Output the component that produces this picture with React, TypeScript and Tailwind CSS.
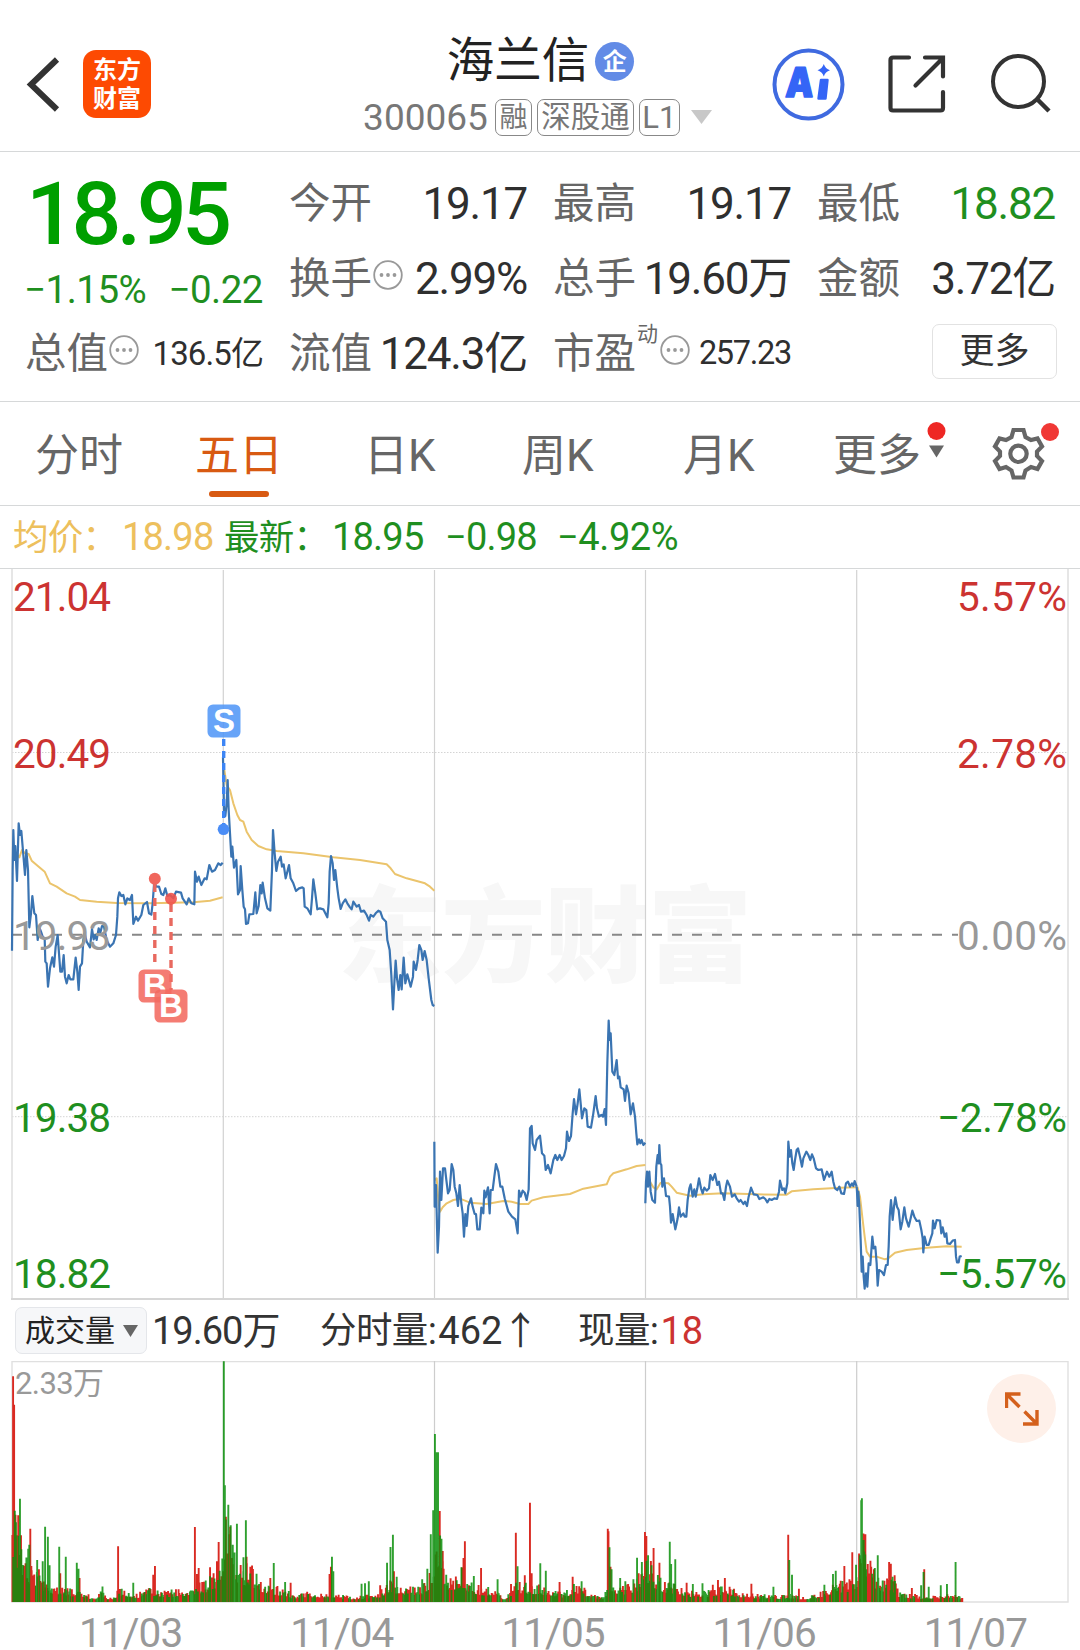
import React from 'react';

type Pair = [number, number];

interface DaySeries {
    transform: string;
    price: string;
    avg: string;
}

// Intraday series, stored at 3x density
const DAYS: DaySeries[] = [
    {
        transform: 'translate(0 570) scale(0.33333)',
        price: '36,1142 38,900 40,780 43,870 46,828 51,933 56,760 60,795 64,783 70,855 75,915 79,840 84,900 88,1072 93,1030 97,978 103,1030 108,1035 113,1110 118,1072 123,1085 128,1100 134,1105 136,1175 140,1180 144,1250 150,1195 157,1162 162,1190 167,1130 173,1095 177,1150 181,1205 186,1205 191,1155 195,1220 200,1240 206,1215 211,1228 220,1228 227,1163 232,1205 236,1260 240,1190 246,1180 250,1110 254,1090 260,1115 270,1132 276,1077 281,1108 286,1095 290,1110 296,1075 301,1088 306,1068 312,1070 320,1110 330,1130 340,1120 348,1095 352,1040 354,985 358,967 364,978 370,975 376,1003 382,985 390,990 396,975 400,1062 408,1040 414,1052 424,1035 430,1005 441,996 447,1030 454,1034 458,1000 463,930 468,950 477,950 484,972 490,975 496,955 502,978 510,975 520,985 528,965 543,968 548,985 560,1003 566,985 574,1000 583,1003 585,905 591,935 596,920 604,945 614,925 620,928 628,885 636,905 645,900 655,880 662,885 668,878',
        avg: '46,850 58,862 66,840 75,850 86,852 95,872 110,885 134,905 150,940 170,950 200,970 225,980 240,990 290,995 350,999 450,1000 580,997 630,992 668,982',
    },
    {
        transform: 'translate(0 570) scale(0.33333)',
        price: '669,560 672,720 676,738 680,700 683,630 686,720 690,790 694,860 697,830 702,893 709,870 714,973 720,960 722,888 727,960 731,1010 735,1018 738,1062 744,1060 748,1033 760,1032 766,967 770,1030 776,1008 781,945 785,970 788,938 795,985 802,1015 811,1022 816,900 819,780 824,850 829,903 834,875 842,860 846,890 851,883 857,925 862,905 867,885 872,925 880,940 888,963 897,955 907,952 911,955 914,1010 922,1015 932,1033 936,985 940,928 946,970 952,1018 960,1015 970,1018 982,1042 986,1000 989,905 993,858 998,880 1002,930 1006,900 1012,955 1016,985 1022,1017 1028,1000 1036,988 1042,1000 1050,1012 1055,1018 1060,995 1070,1010 1077,1005 1083,1025 1092,1022 1100,1035 1107,1052 1112,1035 1120,1040 1127,1030 1135,1022 1141,1025 1148,1045 1158,1055 1162,1110 1169,1140 1174,1215 1179,1318 1183,1240 1187,1172 1191,1225 1196,1260 1201,1215 1205,1258 1211,1163 1216,1240 1222,1213 1232,1250 1239,1220 1241,1175 1248,1200 1253,1170 1258,1125 1264,1140 1268,1170 1274,1143 1280,1170 1286,1225 1294,1290 1298,1305 1303,1308',
        avg: '673,600 680,645 690,660 700,700 712,735 720,750 730,755 740,785 755,810 775,828 800,838 830,843 910,850 1000,862 1080,870 1160,883 1172,895 1185,912 1220,925 1275,940 1290,950 1303,962',
    },
    {
        transform: 'translate(420 850) scale(0.33333)',
        price: '43,875 44,1070 48,1005 53,1208 57,1130 60,965 64,1050 69,955 75,955 79,990 84,1030 89,1020 95,942 100,960 104,1010 109,1030 114,1068 119,1005 124,1060 128,1090 132,1160 136,1092 140,1128 145,1068 153,1045 158,1070 164,1092 168,1092 172,1138 179,1138 184,1073 190,1090 193,1022 197,1042 204,1012 209,1090 212,1020 218,1020 223,980 228,942 235,965 241,1010 247,1010 254,1045 265,1085 276,1100 286,1108 293,1150 297,1022 302,1040 308,1022 314,1028 320,1050 326,1018 330,835 335,828 338,880 345,900 350,870 360,857 366,910 373,917 377,960 384,945 392,970 400,930 406,915 412,930 419,915 425,930 432,918 438,895 441,845 447,873 453,858 458,790 462,747 468,793 473,760 478,718 482,760 486,805 493,775 499,780 503,830 513,833 520,790 527,738 531,775 537,800 544,795 549,800 554,777 558,825 562,640 566,512 569,570 572,550 577,665 583,675 590,630 594,685 598,680 602,712 611,718 615,753 620,707 626,730 632,793 639,760 645,800 649,850 652,883 657,868 661,880 665,870 670,885 676,878',
        avg: '44,990 50,985 56,1060 60,1085 68,1072 80,1060 100,1050 120,1046 150,1058 200,1062 250,1053 275,1055 300,1062 325,1062 335,1052 370,1042 450,1032 490,1016 560,1003 570,980 580,970 620,958 650,948 676,945',
    },
    {
        transform: 'translate(640 1000) scale(0.33333)',
        price: '16,610 18,545 21,515 24,560 28,515 32,575 37,600 45,608 49,500 53,465 56,490 58,435 61,490 64,495 67,560 72,535 78,588 87,590 90,620 93,668 98,642 106,688 110,670 113,655 117,622 122,650 130,640 134,650 139,650 143,600 148,565 152,553 158,590 163,568 167,590 172,565 177,535 183,565 188,580 193,563 200,572 207,565 211,525 218,540 225,522 232,555 237,545 243,580 248,580 253,600 258,560 262,542 270,560 276,590 284,583 290,595 297,605 302,600 310,612 315,605 321,618 326,590 333,563 341,583 352,585 358,597 370,592 376,597 382,607 388,597 395,600 403,595 411,597 417,575 420,542 427,570 432,565 436,580 442,550 445,425 449,470 453,450 457,490 461,510 465,480 470,450 474,445 480,470 486,500 490,475 499,455 505,465 511,480 516,463 521,475 528,505 535,510 545,508 552,540 561,515 568,530 575,515 580,545 585,565 592,570 598,560 604,580 612,582 618,550 624,545 630,560 636,550 640,558 644,543 650,560',
        avg: '22,520 30,545 40,562 50,568 62,548 85,550 95,560 110,578 150,587 190,583 250,580 350,583 440,584 455,574 520,568 600,563 650,562',
    },
    {
        transform: 'translate(640 1000) scale(0.33333)',
        price: '650,560 651,575 653,618 655,575 658,620 662,720 665,815 668,770 671,830 674,866 678,820 682,860 686,790 691,795 697,710 701,745 706,740 710,790 713,857 717,810 725,815 732,825 738,795 743,795 746,740 749,650 753,600 758,660 762,620 766,592 771,620 776,630 782,688 787,665 793,622 798,655 806,680 812,655 817,632 823,650 830,663 838,662 844,690 848,715 850,757 854,710 860,735 866,735 872,715 877,700 879,662 884,685 890,660 900,662 904,700 908,682 914,710 919,700 922,730 930,732 938,722 945,720 948,770 951,787 956,787 959,770 965,768',
        avg: '652,560 660,590 668,660 674,710 680,755 690,770 710,770 735,778 745,775 765,758 800,750 860,743 920,739 965,740',
    },
];

const DAY_LINES = [223.3, 434.5, 645.5, 856.7];

// Typical volume level along the time axis
const VOLUME_LEVELS: Pair[] = [
    [34, 250], [45, 230], [60, 140], [80, 110], [110, 75], [150, 48], [200, 36], [255, 22], [275, 8], [298, 38], [308, 12], [330, 14], [345, 38],
    [400, 22], [440, 38], [480, 28], [540, 36], [590, 50], [630, 85], [645, 150], [655, 245], [690, 110], [730, 90], [770, 50],
    [820, 36], [860, 16], [900, 28], [930, 20], [950, 30], [980, 20], [1030, 12], [1070, 20], [1100, 25], [1140, 60], [1170, 38],
    [1230, 45], [1250, 80], [1275, 220], [1290, 100], [1310, 62], [1340, 90], [1360, 55], [1400, 40], [1440, 35], [1460, 8],
    [1500, 50], [1540, 48], [1590, 40], [1640, 25], [1665, 50], [1700, 36], [1730, 20], [1750, 12], [1770, 50], [1810, 42],
    [1850, 60], [1880, 120], [1900, 80], [1930, 55], [1960, 50], [2000, 30], [2050, 30], [2100, 42], [2150, 28], [2200, 20],
    [2250, 18], [2300, 20], [2340, 10], [2380, 24], [2420, 50], [2470, 60], [2490, 90], [2505, 190], [2520, 110], [2560, 60],
    [2590, 70], [2610, 28], [2650, 20], [2700, 14], [2750, 24], [2795, 12],
];

const RED_SPIKES: Pair[] = [
    [38, 677], [41, 592], [45, 262], [53, 260], [61, 200], [88, 220], [91, 108], [113, 98], [175, 86], [231, 72], [343, 167], [445, 82],
    [450, 108], [566, 225], [572, 84], [577, 102], [610, 104], [630, 122], [635, 180], [656, 256], [716, 136], [727, 106], [785, 72],
    [844, 58], [957, 84], [961, 106], [1104, 50], [1144, 92], [1277, 273], [1286, 122], [1346, 132], [1350, 182], [1397, 102],
    [1484, 54], [1498, 208], [1524, 80], [1539, 298], [1544, 86], [1625, 60], [1663, 76], [1765, 220], [1767, 212], [1773, 106],
    [1873, 210], [1877, 198], [1898, 162], [1915, 118], [1994, 58], [2070, 52], [2085, 66], [2105, 72], [2182, 55], [2289, 202],
    [2320, 40], [2452, 108], [2475, 149], [2511, 194], [2513, 203], [2520, 114], [2530, 106], [2582, 120], [2587, 115], [2598, 80],
    [2648, 42], [2684, 98],
];

const GREEN_SPIKES: Pair[] = [
    [43, 274], [58, 310], [62, 158], [82, 160], [85, 172], [108, 126], [124, 122], [131, 226], [139, 196], [144, 110], [172, 166],
    [191, 136], [223, 118], [228, 100], [387, 58], [650, 722], [653, 350], [663, 292], [670, 230], [676, 172], [688, 235], [707, 134],
    [714, 245], [745, 85], [795, 117], [828, 60], [964, 136], [968, 92], [1050, 55], [1060, 56], [1071, 62], [1124, 118],
    [1134, 165], [1141, 202], [1152, 76], [1226, 68], [1241, 100], [1251, 203], [1258, 275], [1263, 504], [1268, 449], [1272, 449], [1282, 190],
    [1340, 104], [1376, 78], [1445, 68], [1503, 107], [1569, 116], [1585, 94], [1689, 62], [1770, 164], [1776, 98], [1801, 72],
    [1816, 62], [1850, 133], [1864, 120], [1882, 140], [1892, 110], [1945, 181], [1949, 114], [1961, 128], [2012, 54], [2040, 56],
    [2246, 46], [2292, 126], [2300, 82], [2394, 52], [2419, 84], [2427, 94], [2486, 112], [2497, 140], [2501, 305], [2503, 311],
    [2508, 186], [2549, 140], [2592, 76], [2675, 50], [2682, 90], [2697, 46], [2732, 50], [2750, 54], [2775, 120],
];

function levelAt(x: number) {
    for (let i = 1; i < VOLUME_LEVELS.length; i++) {
        const [x1, h1] = VOLUME_LEVELS[i];
        if (x <= x1) {
            const [x0, h0] = VOLUME_LEVELS[i - 1];
            return h0 + ((h1 - h0) * (x - x0)) / (x1 - x0);
        }
    }
    return 0;
}

function buildVolume() {
    let red = '';
    let green = '';
    let seed = 7;
    const bar = (x: number, h: number) => `M${(x / 2.904).toFixed(2)} 1603v${(-h / 3).toFixed(1)}`;
    for (let x = 36; x < 2795; x += 2.54) {
        seed = (seed * 16807) % 2147483647;
        const noise = (seed % 1000) / 1000;
        seed = (seed * 16807) % 2147483647;
        const h = Math.max(8, levelAt(x) * (0.5 + 0.75 * noise * noise));
        if (seed % 100 < 64) red += bar(x, h);
        else green += bar(x, h);
    }
    RED_SPIKES.forEach(([x, h]) => { red += bar(x, h); });
    GREEN_SPIKES.forEach(([x, h]) => { green += bar(x, h); });
    return { red, green };
}

const VOLUME = buildVolume();

function MoreDots() {
    return (
        <svg className="h-[30px] w-[30px] shrink-0" viewBox="0 0 30 30" fill="none">
            <circle cx="15" cy="15" r="13.8" stroke="#999" strokeWidth="1.8" />
            <circle cx="8.5" cy="15" r="1.9" fill="#999" />
            <circle cx="15" cy="15" r="1.9" fill="#999" />
            <circle cx="21.5" cy="15" r="1.9" fill="#999" />
        </svg>
    );
}

interface QuoteProps {
    label: string;
    value: string;
    valueClass?: string;
    dots?: boolean;
    sup?: string;
}

function Quote({ label, value, valueClass = 'text-[44px] tracking-[-1.2px] text-[#2f2f2f]', dots, sup }: QuoteProps) {
    return (
        <div className="flex h-[75px] items-center justify-between whitespace-nowrap leading-none">
            <div className="-ml-px flex items-center">
                <span className="pt-px text-[41.500px] text-[#666]">{label}</span>
                {sup && <span className="-mt-[38px] ml-px text-[21px] text-[#666]">{sup}</span>}
                {dots && <span className={sup ? '-mt-[8px] ml-[2px]' : '-mt-[8px] ml-px'}><MoreDots /></span>}
            </div>
            <span className={valueClass}>{value}</span>
        </div>
    );
}

function Header() {
    return (
        <header className="flex h-[152px] border-b border-[#d6d8d9] pl-[26px]">
            <div className="flex w-[334px] items-start pt-[50px]">
                <svg className="mt-[6px] h-[58px] w-[34px]" viewBox="0 0 34 58" fill="none" stroke="#333" strokeWidth="6">
                    <path d="M31 3.500L5 28.500L31 53.500" strokeLinejoin="miter" />
                </svg>
                <div className="ml-[23px] flex h-[68px] w-[68px] flex-col items-center justify-center rounded-[13px] bg-[#fd4a02] pt-px text-[24px] font-bold leading-[29px] text-white">
                    <span>东方</span>
                    <span>财富</span>
                </div>
            </div>

            <div className="flex w-[352px] flex-col items-center pt-[38px]">
                <div className="flex items-center pl-[9px] leading-none">
                    <span className="text-[47.500px] text-[#222]">海兰信</span>
                    <span className="ml-[6px] flex h-[39px] w-[39px] items-center justify-center rounded-full bg-[#628be6] text-[24px] font-bold text-white">企</span>
                </div>
                <div className="mt-[13px] flex items-center gap-[5px] whitespace-nowrap pl-[4px] leading-none text-[#777]">
                    <span className="mr-[2px] text-[37px]">300065</span>
                    <span className="flex h-[37px] w-[37px] items-center justify-center rounded-[7px] border border-[#888] pt-px text-[28px]">融</span>
                    <span className="flex h-[37px] w-[97px] items-center justify-center rounded-[7px] border border-[#888] pt-px text-[29.500px]">深股通</span>
                    <span className="flex h-[37px] w-[41px] items-center justify-center rounded-[7px] border border-[#888] text-[31px]">L1</span>
                    <svg className="ml-[5px] h-[15px] w-[23px]" viewBox="0 0 23 15"><path d="M1 0H22L11.500 14Z" fill="#c8c8c8" /></svg>
                </div>
            </div>

            <div className="ml-[60px] flex items-start pt-[48px]">
                <svg className="h-[73px] w-[73px]" viewBox="0 0 73 73" fill="none">
                    <circle cx="36.500" cy="36.500" r="34" stroke="#3f6ae0" strokeWidth="4" />
                    <text x="12.500" y="49.500" fontSize="41" fontWeight="900" fill="#3565f6" stroke="#3565f6" strokeWidth="1.600" strokeLinejoin="round" fontFamily="Inter" transform="skewX(-3) translate(3 0)" textLength="28" lengthAdjust="spacingAndGlyphs">A</text>
                    <path d="M49 32H55.500L53.500 50.500H46.500Z" fill="#3565f6" stroke="#3565f6" strokeWidth="2.400" strokeLinejoin="round" />
                    <path d="M51.800 16Q53.300 20.700 58 22.300Q53.300 23.800 51.800 28.500Q50.200 23.800 45.500 22.300Q50.200 20.700 51.800 16Z" fill="#3565f6" />
                </svg>
                <svg className="ml-[42px] mt-[6px] h-[60px] w-[60px]" viewBox="0 0 60 60" fill="none" stroke="#333" strokeWidth="4.200" strokeLinecap="round">
                    <path d="M22 3.500H6Q3.500 3.500 3.500 6V54Q3.500 56.500 6 56.500H53.500Q56 56.500 56 54V38" />
                    <path d="M38 3.500H56V22.500M55 5L28.500 31.500" />
                </svg>
                <svg className="ml-[42px] mt-[5px] h-[62px] w-[62px]" viewBox="0 0 62 62" fill="none" stroke="#333" strokeWidth="4">
                    <circle cx="29.500" cy="28.500" r="25.500" />
                    <path d="M48 46L60 58" strokeWidth="4.500" />
                </svg>
            </div>
        </header>
    );
}

function Summary() {
    return (
        <section className="flex h-[250px] gap-[27px] border-b border-[#d6d8d9] pl-[26px] pt-[14px]">
            <div className="w-[237px]">
                <div className="flex h-[150px] flex-col">
                    <span className="mt-[4px] text-[88px] font-medium leading-none tracking-[-4.600px] text-[#009f00]">18.95</span>
                    <div className="-ml-[2px] mt-[13px] flex justify-between whitespace-nowrap text-[38.500px] leading-none tracking-[-0.500px] text-[#1f8f1f]">
                        <span>−1.15%</span>
                        <span>−0.22</span>
                    </div>
                </div>
                <Quote label="总值" value="136.5亿" valueClass="text-[33px] tracking-[-0.900px] text-[#2f2f2f]" dots />
            </div>
            <div className="w-[237px]">
                <Quote label="今开" value="19.17" />
                <Quote label="换手" value="2.99%" dots />
                <Quote label="流值" value="124.3亿" />
            </div>
            <div className="w-[237px]">
                <Quote label="最高" value="19.17" />
                <Quote label="总手" value="19.60万" />
                <Quote label="市盈" sup="动" value="257.23" valueClass="text-[32.500px] tracking-[-1.300px] text-[#2f2f2f]" dots />
            </div>
            <div className="w-[237px]">
                <Quote label="最低" value="18.82" valueClass="text-[44px] tracking-[-1.2px] text-[#1f8f1f]" />
                <Quote label="金额" value="3.72亿" />
                <div className="flex h-[75px] items-center justify-end pb-[5px]">
                    <button className="-mr-[2px] flex h-[55px] w-[125px] items-center justify-center rounded-[7px] border border-[#e2e2e2] text-[35px] leading-none text-[#333]">更多</button>
                </div>
            </div>
        </section>
    );
}

function Tabs() {
    return (
        <nav className="flex h-[104px] items-center border-b border-[#d6d8d9] pl-[35px] text-[44px] leading-none text-[#666]">
            <span className="w-[160px] pt-[4px]">分时</span>
            <span className="relative w-[169px] pt-[4px] text-[#d85a12]">
                五日
                <i className="absolute -bottom-[19px] left-[14px] h-[6px] w-[60px] rounded-full bg-[#d85a12]" />
            </span>
            <span className="w-[158px] pt-[4px]">日K</span>
            <span className="w-[161px] pt-[4px]">周K</span>
            <span className="w-[150px] pt-[4px]">月K</span>
            <span className="w-[94px] pt-[4px]">更多</span>
            <svg className="-mt-[28px] h-[38px] w-[20px]" viewBox="0 0 20 38">
                <circle cx="9.500" cy="10" r="9" fill="#ee2724" />
                <path d="M2 24.500H17L9.500 36.500Z" fill="#666" />
            </svg>
            <div className="relative ml-[45px]">
                <svg className="h-[53px] w-[53px]" viewBox="0 0 53 53" fill="none" stroke="#666" strokeWidth="4.200">
                    <path d="M21.500 3H31.500L33.500 10L39 13L45.500 11.500L50 19.500L45 24.500V29L50 34L45.500 42L39 40L33.500 43.500L31.500 50.500H21.500L19.500 43.500L14 40L7.500 42L3 34L8 29V24.500L3 19.500L7.500 11.500L14 13L19.500 10Z" />
                    <circle cx="26.500" cy="26.800" r="8.200" />
                </svg>
                <i className="absolute -right-[14px] -top-[4px] h-[18px] w-[18px] rounded-full bg-[#f03835]" />
            </div>
        </nav>
    );
}

function AxisLabel({ y, left, right, width, color }: { y: number; left: string; right: string; width: number; color: string }) {
    return (
        <g fill={color} fontSize="40.5">
            <text x="13" y={y} textLength="98" lengthAdjust="spacing">{left}</text>
            <text x={1067 - width} y={y} textLength={width} lengthAdjust="spacing">{right}</text>
        </g>
    );
}

function Badge({ x, y, letter, color }: { x: number; y: number; letter: string; color: string }) {
    return (
        <g>
            <rect x={x} y={y} width="33" height="33" rx="5.500" fill={color} fillOpacity="0.88" />
            <text x={x + 16.5} y={y + 27.5} textAnchor="middle" fontSize="33" fontWeight="700" fill="#fff" fontFamily="Liberation Sans">{letter}</text>
        </g>
    );
}

function PriceChart() {
    return (
        <svg className="block h-[731px] w-[1080px]" viewBox="0 569 1080 731" fill="none">
            <text x="338" y="974" fontSize="104" fontWeight="900" fill="#f7f7f7" textLength="414">东方财富</text>
            <g stroke="#d2d2d2" strokeWidth="1.2">
                {DAY_LINES.map((x) => <path key={x} d={`M${x} 570V1299`} />)}
            </g>
            <path d="M12 752.500H1068M12 1116.700H1068" stroke="#d4d4d4" strokeWidth="1" strokeDasharray="1.500 1.500" />
            <path d="M12 569V1299M1068 569V1299" stroke="#e0e0e0" strokeWidth="1.600" />
            <path d="M11 1299H1069" stroke="#d6d6d6" strokeWidth="2" />
            <path d="M12 934.700H958" stroke="#888" strokeWidth="1.900" strokeDasharray="10 10" />
            {DAYS.map((d, i) => (
                <g key={i} transform={d.transform} strokeLinejoin="round">
                    <polyline points={d.avg} stroke="#ebc46c" strokeWidth="6" />
                    <polyline points={d.price} stroke="#3a74b2" strokeWidth="6.600" />
                </g>
            ))}
            <AxisLabel y={610.5} left="21.04" right="5.57%" width={110} color="#cc3331" />
            <AxisLabel y={767.5} left="20.49" right="2.78%" width={110} color="#cc3331" />
            <AxisLabel y={949.5} left="19.93" right="0.00%" width={110} color="#999" />
            <AxisLabel y={1131.5} left="19.38" right="−2.78%" width={130} color="#1f8f1f" />
            <AxisLabel y={1288} left="18.82" right="−5.57%" width={130} color="#1f8f1f" />

            <path d="M223.700 739V829" stroke="#3c85f5" strokeWidth="3.400" strokeDasharray="7 5" />
            <circle cx="223.500" cy="829.300" r="5.800" fill="#4a8df6" />
            <path d="M154.800 884V968M171 904V990" stroke="#e8695f" strokeWidth="3.400" strokeDasharray="8 6" />
            <circle cx="154.800" cy="878.700" r="6" fill="#f0665c" />
            <circle cx="171" cy="898.700" r="6" fill="#f0544c" fillOpacity="0.9" />
            <Badge x={207.5} y={704.5} letter="S" color="#5297f7" />
            <Badge x={138.5} y={969.5} letter="B" color="#f26a60" />
            <Badge x={154.5} y={989.5} letter="B" color="#f26a60" />
        </svg>
    );
}

function VolumeChart() {
    return (
        <div className="relative">
            <svg className="block h-[242px] w-[1080px]" viewBox="0 1362 1080 242" fill="none">
                <path d="M12 1603V1362.500H1068V1603Z" stroke="#e0e0e0" strokeWidth="1.400" />
                <g stroke="#cdcdcd" strokeWidth="1.200">
                    {DAY_LINES.map((x) => <path key={x} d={`M${x} 1362V1603`} />)}
                </g>
                <path d={VOLUME.red} stroke="#d92a22" strokeWidth="1.900" />
                <path d={VOLUME.green} stroke="#0a8f0a" strokeWidth="1.900" strokeOpacity="0.85" />
                <text x="15" y="1395" fontSize="31" fill="#999" textLength="89" lengthAdjust="spacing">2.33万</text>
            </svg>
            <button className="absolute right-[24px] top-[13px] flex h-[69px] w-[69px] items-center justify-center rounded-full bg-[#fef0e9]">
                <svg className="h-[34px] w-[34px]" viewBox="0 0 34 34" fill="none" stroke="#d4601c" strokeWidth="3.400">
                    <path d="M1.500 16V2H15.500M2 2.500L14.500 15M32 18V32H18M31.500 31.500L19.500 19.500" />
                </svg>
            </button>
        </div>
    );
}

export default function App() {
    const dates = ['11/03', '11/04', '11/05', '11/06', '11/07'];
    return (
        <div className="flex h-[1650px] w-[1080px] flex-col overflow-hidden bg-white font-[Roboto,'Noto_Sans_CJK_SC',sans-serif]">
            <Header />
            <Summary />
            <Tabs />

            <div className="flex h-[63px] items-center whitespace-pre border-b border-[#d6d8d9] pl-[13px] text-[38px] leading-none tracking-[-0.800px] text-[#1f8f1f]">
                <div className="flex w-[211px] items-center text-[#edc05d]"><span className="w-[109px] pt-[3px] text-[35.500px]">均价：</span>18.98</div>
                <span className="w-[108px] pt-[3px] text-[35.500px]">最新：</span>
                <span className="w-[113px]">18.95</span>
                <span className="w-[112px]">−0.98</span>
                <span className="tracking-[-0.400px]">−4.92%</span>
            </div>

            <PriceChart />

            <div className="flex h-[61px] items-center pl-[15px] text-[38px] leading-none tracking-[-0.600px] text-[#333]">
                <div className="flex h-[47px] w-[132px] items-center rounded-[7px] border border-[#e4e6ea] bg-[#f6f7f9] pl-[9px] text-[30px] tracking-normal text-[#222]">
                    成交量
                    <svg className="ml-[8px] h-[12px] w-[15px]" viewBox="0 0 15 12"><path d="M0 0H15L7.500 12Z" fill="#666" /></svg>
                </div>
                <span className="ml-[5px] w-[168px] tracking-[-1px]">19.60万</span>
                <span className="flex w-[258px] items-center"><span className="pt-[2px] text-[36.500px]">分时量</span>:<span className="ml-[2px] tracking-normal">462</span><span className="-ml-px">↑</span></span>
                <span className="flex items-center"><span className="pt-[2px] text-[36.500px]">现量</span>:<span className="ml-[2px] tracking-normal text-[#cc3331]">18</span></span>
            </div>

            <VolumeChart />

            <div className="ml-[12px] flex h-[46px] pt-[14px] text-[40.500px] leading-[32px] tracking-[-0.900px] text-[#999]">
                {dates.map((d) => <span key={d} className="w-[211.200px] shrink-0 pl-[67px]">{d}</span>)}
            </div>
        </div>
    );
}
